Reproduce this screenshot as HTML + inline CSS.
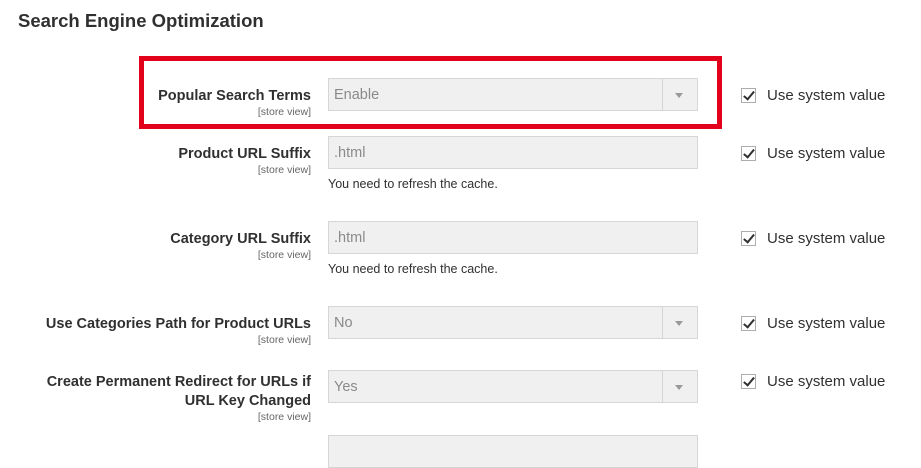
<!DOCTYPE html>
<html><head><style>
body{margin:0;width:921px;height:443px;background:#fff;font-family:"Liberation Sans",sans-serif;color:#303030;position:relative;overflow:hidden}
.a{position:absolute}
h1{position:absolute;left:18px;top:10px;margin:0;font-size:18.5px;font-weight:bold;color:#303030}
.lbl{position:absolute;right:610px;text-align:right;font-size:14.5px;font-weight:bold;color:#303030;line-height:19px}
.sv{display:block;font-size:10.5px;font-weight:normal;color:#666;line-height:13px}
.inp{position:absolute;left:328px;width:370px;height:33px;background:#f0f0f0;border:1px solid #d6d6d6;box-sizing:border-box;font-size:14.5px;color:#8a8a8a;line-height:33px;padding-left:5px}
.sel:after{content:"";position:absolute;right:0;top:0;width:34px;height:31px;border-left:1px solid #d6d6d6}
.sel:before{content:"";position:absolute;right:14px;top:14px;border-left:4px solid transparent;border-right:4px solid transparent;border-top:5px solid #999}
.note{position:absolute;left:328px;font-size:12.5px;color:#303030}
.cb{position:absolute;left:741px;width:15px;height:15px;border:1px solid #adadad;box-sizing:border-box;background:#fff}
.cb:after{content:"";position:absolute;left:4px;top:0px;width:4px;height:9px;border:solid #303030;border-width:0 2px 2px 0;transform:rotate(40deg)}
.ut{position:absolute;left:767px;font-size:15px;color:#303030}
</style></head><body>
<h1>Search Engine Optimization</h1>
<div class="a" style="left:139px;top:56px;width:583px;height:73px;border:5px solid #e2001a;box-sizing:border-box"></div>

<div class="lbl" style="top:87px">Popular Search Terms<span class="sv">[store view]</span></div>
<div class="inp sel" style="top:78px">Enable</div>
<div class="cb" style="top:88px"></div><div class="ut" style="top:87px">Use system value</div>

<div class="lbl" style="top:145px">Product URL Suffix<span class="sv">[store view]</span></div>
<div class="inp" style="top:136px">.html</div>
<div class="note" style="top:177px">You need to refresh the cache.</div>
<div class="cb" style="top:146px"></div><div class="ut" style="top:145px">Use system value</div>

<div class="lbl" style="top:230px">Category URL Suffix<span class="sv">[store view]</span></div>
<div class="inp" style="top:221px">.html</div>
<div class="note" style="top:262px">You need to refresh the cache.</div>
<div class="cb" style="top:231px"></div><div class="ut" style="top:230px">Use system value</div>

<div class="lbl" style="top:315px">Use Categories Path for Product URLs<span class="sv">[store view]</span></div>
<div class="inp sel" style="top:306px">No</div>
<div class="cb" style="top:316px"></div><div class="ut" style="top:315px">Use system value</div>

<div class="lbl" style="top:373px">Create Permanent Redirect for URLs if<br>URL Key Changed<span class="sv">[store view]</span></div>
<div class="inp sel" style="top:370px">Yes</div>
<div class="cb" style="top:374px"></div><div class="ut" style="top:373px">Use system value</div>

<div class="inp" style="top:435px"></div>
</body></html>
